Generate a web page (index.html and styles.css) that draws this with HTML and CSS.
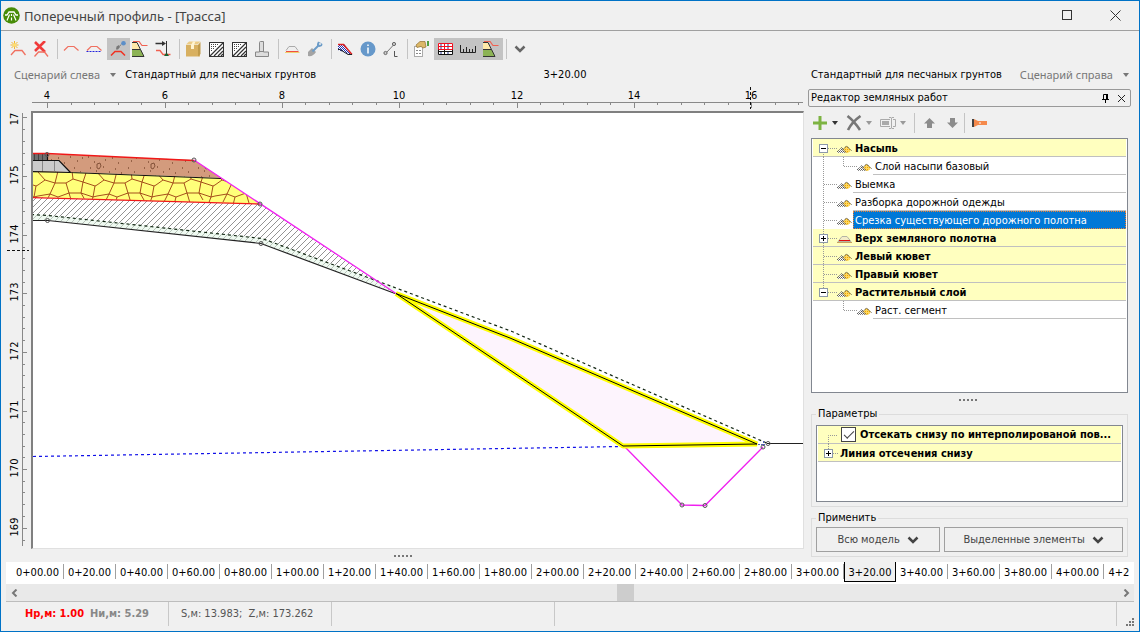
FILE: index.html
```html
<!DOCTYPE html>
<html lang="ru">
<head>
<meta charset="utf-8">
<meta name="viewport" content="width=device-width, initial-scale=1">
<title>Поперечный профиль - [Трасса]</title>
<link rel="stylesheet" href="styles.css">
</head>
<body>
<svg class="defs" width="0" height="0" aria-hidden="true">
  <defs>
    <pattern id="dots" width="2" height="2" patternUnits="userSpaceOnUse">
      <rect width="2" height="2" fill="#fff"/><rect width="1" height="1" fill="#555"/><rect x="1" y="1" width="1" height="1" fill="#888"/>
    </pattern>
    <pattern id="dots-gold" width="2" height="2" patternUnits="userSpaceOnUse">
      <rect width="2" height="2" fill="#ffd860"/><rect width="1" height="1" fill="#f0a800"/>
    </pattern>
    <pattern id="dots-blue" width="2" height="2" patternUnits="userSpaceOnUse">
      <rect width="2" height="2" fill="#fff"/><rect width="1" height="1" fill="#2030b0"/><rect x="1" y="1" width="1" height="1" fill="#2030b0"/>
    </pattern>
    <symbol id="layers" viewBox="0 0 15 8">
      <path d="M0 8L4.500 3L9 8Z" fill="url(#dots)"/>
      <path d="M6 4.500L9.500 1L14 5L11 8H9Z" fill="url(#dots-gold)"/>
      <path d="M0 7L4.500 2.500L9 7.500M6 4.500L9.500 1L14.500 5.500" fill="none" stroke="#333" stroke-width=".9" stroke-dasharray="1.200 .6"/>
    </symbol>
    <symbol id="crown" viewBox="0 0 15 8">
      <path d="M1 6.500L5 1.500H10L14 6.500Z" fill="#f4edc8" stroke="#b4b4a4"/>
      <path d="M2 5.500H13" stroke="#e01010"/><path d="M0 7.500H15" stroke="#c8a060"/>
    </symbol>
    <symbol id="chevron" viewBox="0 0 12 8"><path d="M1.500 1.500L6 6L10.500 1.500" fill="none" stroke="currentColor" stroke-width="2.500"/></symbol>
    <symbol id="caret" viewBox="0 0 6 4"><path d="M0 0H6L3 4Z" fill="currentColor"/></symbol>
    <symbol id="slope" viewBox="0 0 16 16">
      <path d="M0 2H5L8 8.500H0Z" fill="#ffe9a8"/><path d="M0 9H9L12 15.500H0Z" fill="#8cb355"/>
      <path d="M0 1.500H5L8.500 8.500L12 15.500H0M0 8.500H8.500" fill="none" stroke="#333"/>
      <path d="M1 .5H7L10 4.500H15.500" fill="none" stroke="#f06050" stroke-width="1.200"/>
    </symbol>
    <symbol id="hatchbox" viewBox="0 0 16 16">
      <rect x="1.500" y="1.500" width="14" height="14" fill="#fff" stroke="#333"/>
      <path d="M2 15L15 2M6 15L15 6M10 15L15 10M13 15L15 13" stroke="#333" stroke-width="1.200"/>
      <path d="M3 3.500H11M3 5.500H9M3 7.500H7M3 9.500H5" stroke="#444" stroke-dasharray="1 1"/>
    </symbol>
  </defs>
</svg>

<div class="window">
  <header class="titlebar">
    <svg class="logo" width="17" height="17" viewBox="0 0 17 17"><circle cx="8.500" cy="8.500" r="8.300" fill="#478c08"/><path d="M2 8H4L6 5H11L13 8H15" fill="none" stroke="#fff" stroke-width="1.300"/><path d="M6.500 7.500L4 13.500M10.500 7.500L13 13.500M8.500 7V9M8.500 10.500V13.500" stroke="#fff" stroke-width="1.200"/></svg>
    <h1 class="title">Поперечный профиль - [Трасса]</h1>
    <button class="winbtn" aria-label="Развернуть"><svg width="11" height="11" viewBox="0 0 11 11"><rect x=".5" y=".5" width="9" height="9" fill="none" stroke="#333"/></svg></button>
    <button class="winbtn" aria-label="Закрыть"><svg width="11" height="11" viewBox="0 0 11 11"><path d="M.5 .5L10.500 10.500M10.500 .5L.5 10.500" stroke="#333" fill="none"/></svg></button>
  </header>

  <div class="toolbar" role="toolbar" aria-label="Инструменты">
    <button class="tool" aria-label="Создать линию"><svg width="16" height="16" viewBox="0 0 16 16"><path d="M4.500 0V8M.5 4H8.500M1.500 1L7.500 7M7.500 1L1.500 7" stroke="#f2b632" stroke-width="1"/><circle cx="4.500" cy="4" r="1.700" fill="#ffdf70"/><path d="M1 14L5 9.500H12L15.500 14" fill="none" stroke="#f07060" stroke-width="1.300"/></svg></button>
    <button class="tool" aria-label="Удалить линию"><svg width="16" height="16" viewBox="0 0 16 16"><path d="M2 1L12 11M12 0L2 10" stroke="#f03a3a" stroke-width="2.600"/><path d="M1.500 15.500L5.500 11H11.500L15 15.500" fill="none" stroke="#f07060" stroke-width="1.300"/></svg></button>
    <span class="sep"></span>
    <button class="tool" aria-label="Линия"><svg width="16" height="16" viewBox="0 0 16 16"><path d="M1 9.500L5 5.500H11L15.500 9.500" fill="none" stroke="#f07060" stroke-width="1.200"/></svg></button>
    <button class="tool" aria-label="Линия основания"><svg width="16" height="16" viewBox="0 0 16 16"><path d="M1 9.500L5 5.500H11L15.500 9.500" fill="none" stroke="#f07060" stroke-width="1.200"/><path d="M.5 10.500H15.500" stroke="#2222dd" stroke-dasharray="2 1"/></svg></button>
    <button class="tool on" aria-pressed="true" aria-label="Конструктор линии"><svg width="16" height="16" viewBox="0 0 16 16"><path d="M1 14.500L5 10.500H11L15 14.500" fill="none" stroke="#f03020" stroke-width="1.500"/><path d="M8 6.500L13 2" stroke="#777" stroke-dasharray="1.500 1"/><path d="M6.500 5.500L9 4L10 6L8 8.500H6Z" fill="#777"/><circle cx="13.500" cy="2.300" r="2.300" fill="#5c8fc8"/></svg></button>
    <button class="tool" aria-label="Откос"><svg width="16" height="16"><use href="#slope"/></svg></button>
    <button class="tool" aria-label="Привязка"><svg width="16" height="16" viewBox="0 0 16 16"><path d="M.5 2.500H9" stroke="#333" stroke-width="1.500"/><path d="M7 0L11 2.500L7 5Z" fill="#333"/><path d="M11.500 0V14.500" stroke="#333"/><path d="M1 9.500H5L8 13.500H15.500" fill="none" stroke="#f06050" stroke-width="1.300"/><path d="M9 15L11.500 11.500L14 15Z" fill="#176030"/></svg></button>
    <span class="sep"></span>
    <button class="tool" aria-label="Библиотека"><svg width="16" height="16" viewBox="0 0 16 16"><path d="M1 4H15V15.500H1Z" fill="#d8b060"/><path d="M1 3.500L4 .5H15.500L12.500 3.500Z" fill="#eccb85"/><path d="M13 4L15.500 1V13L13 15.500Z" fill="#c09a4a"/><path d="M6 4L8 .5H10.500L9 4V8H6Z" fill="#fff3d0"/></svg></button>
    <button class="tool" aria-label="Штриховка"><svg width="16" height="16"><use href="#hatchbox"/></svg></button>
    <button class="tool" aria-label="Штриховка слоя"><svg width="16" height="16"><use href="#hatchbox"/></svg></button>
    <button class="tool" aria-label="Фундамент"><svg width="14" height="16" viewBox="0 0 14 16"><path d="M4.500 11V1.500Q4.500 .5 5.500 .5H8.500V11H13.500V15.500H.5V11H4.500" fill="#ddd" stroke="#888"/><path d="M5 10.500H8" stroke="#888"/></svg></button>
    <span class="sep"></span>
    <button class="tool" aria-label="Верх полотна"><svg width="16" height="16" viewBox="0 0 16 16"><path d="M2 9.500L5 5.500H11L14 9.500" fill="#eee" stroke="#aaa"/><path d="M1 11.500H15.500" stroke="#f0d070"/><path d="M2 10.500H14.500" stroke="#f05040"/></svg></button>
    <button class="tool" aria-label="Земляные работы"><svg width="16" height="16" viewBox="0 0 16 16"><path d="M1 11L5 7L9 11Q6 16 1 15Z" fill="#a4a4a4"/><path d="M5.500 10.500L12 4" stroke="#6c9cc8" stroke-width="2"/><path d="M10 3L11 .5L13 1.500L15.500 3L15 5L12.500 6L10 5Z" fill="#6c9cc8"/><circle cx="13" cy="3" r="1" fill="#eee"/></svg></button>
    <span class="sep"></span>
    <button class="tool" aria-label="Заливка слоёв"><svg width="16" height="16" viewBox="0 0 16 16"><path d="M1 3H7L15 13H12L1 9Z" fill="url(#dots-blue)"/><path d="M1 3.500H6.500L15 13.500" fill="none" stroke="#e02020" stroke-width="1.500"/><path d="M1 8.500H3L11 13.500H15" fill="none" stroke="#222"/></svg></button>
    <button class="tool" aria-label="Информация"><svg width="16" height="16" viewBox="0 0 16 16"><circle cx="8" cy="8" r="7.500" fill="#6698ca"/><path d="M8 3.500V5M8 6.500V12.500" stroke="#fff" stroke-width="1.500"/></svg></button>
    <button class="tool" aria-label="Длина"><svg width="16" height="16" viewBox="0 0 16 16"><path d="M3.500 11.500L10.500 4" stroke="#777"/><circle cx="2.500" cy="12" r="1.600" fill="#ccc" stroke="#666"/><circle cx="11" cy="3" r="1.600" fill="#ccc" stroke="#666"/><path d="M11.500 10V15.500H14.500" fill="none" stroke="#555"/></svg></button>
    <span class="sep"></span>
    <button class="tool" aria-label="Свойства"><svg width="16" height="16" viewBox="0 0 16 16"><rect x="1.500" y="5.500" width="8" height="10" fill="#fff" stroke="#aaa"/><path d="M3 9.500H8M3 12.500H8" stroke="#888" stroke-dasharray="2 1"/><path d="M3 4L7 .5H12L13 6L10 7L8 5.500L4 6.500Z" fill="#dcb868" stroke="#907030" stroke-width=".7"/><path d="M15 0V5" stroke="#50a040" stroke-width="2"/></svg></button>
    <button class="tool on" aria-pressed="true" aria-label="Таблица"><svg width="16" height="16" viewBox="0 0 16 16"><rect x="1" y="2" width="15" height="12" fill="#fff"/><path d="M1.500 8V13.500H15.500V8M1.500 10.500H15.500M7.500 8V13.500" fill="none" stroke="#111"/><path d="M1.500 2.500H15.500V8.500H1.500ZM7.500 2.500V8.500M1.500 5.500H15.500" fill="none" stroke="#f01020"/><path d="M3 4H5M10 4H12M3 7H5M10 7H12M3 12H5M10 12H12" stroke="#223090"/></svg></button>
    <button class="tool on" aria-pressed="true" aria-label="Линейка"><svg width="16" height="16" viewBox="0 0 16 16"><path d="M.5 4V11.500H15.500V5M3.500 11V8M6.500 11V6M9.500 11V8M12.500 11V8" fill="none" stroke="#222"/></svg></button>
    <button class="tool on" aria-pressed="true" aria-label="Редактор откоса"><svg width="16" height="16"><use href="#slope"/></svg></button>
    <span class="sep"></span>
    <button class="tool" aria-label="Ещё"><svg class="dim" width="12" height="8"><use href="#chevron"/></svg></button>
  </div>

  <div class="scenarios">
    <div class="scn start">
      <button class="scn-btn">Сценарий слева <svg width="6" height="4"><use href="#caret"/></svg></button>
      <span>Стандартный для песчаных грунтов</span>
    </div>
    <output>3+20.00</output>
    <div class="scn end">
      <span>Стандартный для песчаных грунтов</span>
      <button class="scn-btn">Сценарий справа <svg width="6" height="4"><use href="#caret"/></svg></button>
    </div>
  </div>

  <main class="work">
    <section class="profile" aria-label="Поперечный профиль">
      <svg class="ruler-x">
        <path class="rule" d="M32 17.500H1200"/>
        <path class="rule" d="M47.500 18v5M71.500 18v2M94.500 18v2M118.500 18v2M141.500 18v2M165.500 18v5M188.500 18v2M212.500 18v2M235.500 18v2M259.500 18v2M282.500 18v5M305.500 18v2M329.500 18v2M352.500 18v2M376.500 18v2M399.500 18v5M423.500 18v2M446.500 18v2M470.500 18v2M493.500 18v2M517.500 18v5M540.500 18v2M563.500 18v2M587.500 18v2M610.500 18v2M634.500 18v5M657.500 18v2M681.500 18v2M704.500 18v2M728.500 18v2M751.500 18v5M775.500 18v2M798.500 18v2"/>
        <g text-anchor="middle"><text x="47" y="14">4</text><text x="165" y="14">6</text><text x="282" y="14">8</text><text x="399" y="14">10</text><text x="517" y="14">12</text><text x="634" y="14">14</text><text x="751" y="14">16</text></g>
        <path class="mark" d="M750.500 2V24"/>
      </svg>
      <svg class="ruler-y">
        <path class="rule" d="M22.500 2V435"/>
        <path class="rule" d="M23 6.500h4M23 18.500h2M23 30.500h2M23 42.500h2M23 53.500h2M23 65.500h4M23 77.500h2M23 89.500h2M23 100.500h2M23 112.500h2M23 124.500h4M23 136.500h2M23 147.500h2M23 159.500h2M23 171.500h2M23 182.500h4M23 194.500h2M23 206.500h2M23 217.500h2M23 229.500h2M23 241.500h4M23 253.500h2M23 264.500h2M23 276.500h2M23 288.500h2M23 300.500h4M23 311.500h2M23 323.500h2M23 335.500h2M23 346.500h2M23 358.500h4M23 370.500h2M23 381.500h2M23 393.500h2M23 405.500h2M23 417.500h4M23 429.500h2"/>
        <g text-anchor="middle"><text transform="translate(18 8) rotate(-90)">17</text><text transform="translate(18 64) rotate(-90)">175</text><text transform="translate(18 123) rotate(-90)">174</text><text transform="translate(18 181) rotate(-90)">173</text><text transform="translate(18 240) rotate(-90)">172</text><text transform="translate(18 299) rotate(-90)">171</text><text transform="translate(18 357) rotate(-90)">170</text><text transform="translate(18 416) rotate(-90)">169</text></g>
        <path class="mark" d="M7 139.500H29"/>
      </svg>
      <div class="canvas">
        <svg class="drawing" role="img" aria-label="Чертёж профиля на пикете 3+20.00">
          <defs>
            <pattern id="hatch" width="6" height="6" patternUnits="userSpaceOnUse"><path d="M-1 1L1 -1M-1 7L7 -1M5 7L7 5" stroke="#777" stroke-width=".8"/></pattern>
            <pattern id="gravel" x="31" y="150" width="54" height="34" patternUnits="userSpaceOnUse">
              <rect width="54" height="34" fill="#d39b7d"/>
              <path d="M3 7h1M9 12h1M14 6h1M20 10h1M27 8h1M33 13h1M39 7h1M46 11h1M51 8h1M5 18h1M11 21h1M18 17h1M24 22h1M30 19h1M36 23h1M43 18h1M49 22h1M8 27h1M16 26h1M22 29h1M29 27h1M37 28h1M45 27h1" stroke="#5b2a10"/>
              <path d="M12 14L15 13L16 16L14 19L12 18Z" fill="none" stroke="#7a4a30" stroke-width=".9"/>
            </pattern>
            <pattern id="stone" x="38" y="171" width="59" height="34" patternUnits="userSpaceOnUse">
              <rect width="59" height="34" fill="#ffff7a"/>
              <path d="M0 1L7 9L17 12L20 0M7 9L0 14M17 12L12 23L0 25M12 23L20 26L31 22L28 12L17 12M28 12L35 8L34 0M35 8L45 11L48 2M45 11L43 22L31 22M43 22L47 29M45 11L57 15L59 14M57 15L55 26L43 22M55 26L59 25M20 26L18 34M31 22L34 32M12 23L8 31M55 26L52 34" fill="none" stroke="#9a3a10" stroke-width=".9"/>
            </pattern>
          </defs>
          <g transform="translate(-33 -113)" fill="none">
            <path d="M31 197L260 204L395 293L261 243L48 220H31Z" fill="url(#hatch)"/>
            <path d="M31 214L48 215L262 238L395 287V293L261 243L48 220H31Z" fill="#dff5e4" fill-opacity=".5"/>
            <path d="M31 171L70 172L221 178L260 204L31 197Z" fill="url(#stone)"/>
            <path d="M31 154H47L194 160L221 178L70 172H31Z" fill="url(#gravel)"/>
            <path d="M31 160.500H59L70 172L31 171Z" fill="#cbcbcb"/>
            <path d="M42.500 161V171M54.500 161V171" stroke="#888"/>
            <path d="M31 154H47V160H31Z" fill="#6e6e6e"/>
            <path d="M34.500 154V160M38.500 154V160M42.500 154V160" stroke="#444"/>
            <path d="M47.500 154V160.500M31 160.500H59L70.500 172.500M31 171.500L70 172.500L221 178.500" stroke="#111" stroke-width="1.200"/>
            <path d="M31 153.500H47L194 160.500M31 197.500L260 204" stroke="#f01818" stroke-width="1.300"/>
            <path d="M31 220.500H48L261 243.500L395 293.500M767 443.500H1200" stroke="#222" stroke-width="1.200"/>
            <path d="M31 214.500L48 215.500L262 238.500L380 282L480 319.500L512 331.500L622 380L762 441L768 443.500" stroke="#142814" stroke-dasharray="3 3" stroke-width="1.200"/>
            <path d="M194 160L396 293.500M625 447L682 505L705 505.500L763 447" stroke="#f020f0" stroke-width="1.300"/>
            <path d="M33 456.500L622 446.500" stroke="#1010e8" stroke-dasharray="3 3" stroke-width="1.200"/>
            <path d="M396 293.500L510 338L757 444L623 446Z" fill="#fdf4fd" stroke="#ff0" stroke-width="5" stroke-linejoin="bevel"/>
            <path d="M396 293.500L510 338L757 444L623 446Z" stroke="#000"/>
            <path d="M758 444.500H765M763.500 441V447" stroke="#5060c0" stroke-dasharray="2 1"/>
            <g stroke="#555"><circle cx="47" cy="154.500" r="2"/><circle cx="194" cy="160" r="2"/><circle cx="260" cy="204" r="2"/><circle cx="47.500" cy="220.500" r="2"/><circle cx="261" cy="243.500" r="2"/><circle cx="682" cy="505" r="2"/><circle cx="705" cy="505.500" r="2"/><circle cx="763" cy="447" r="2"/><circle cx="768" cy="443.500" r="2"/></g>
          </g>
        </svg>
      </div>
      <div class="grip"><i></i></div>
    </section>

    <aside class="panel">
      <header class="panel-head">
        <h2>Редактор земляных работ</h2>
        <button class="mini" aria-label="Закрепить"><svg width="9" height="11" viewBox="0 0 9 11"><path d="M2.500 6V1.500H6.500V6M1 6.500H8M4.500 7V10" fill="none" stroke="#000"/><path d="M6 1V6" stroke="#000" stroke-width="2"/></svg></button>
        <button class="mini" aria-label="Закрыть панель"><svg width="9" height="9" viewBox="0 0 9 9"><path d="M1 1L8 8M8 1L1 8" stroke="#222"/></svg></button>
      </header>
      <div class="panel-tools" role="toolbar" aria-label="Действия">
        <button class="ptool wide" aria-label="Добавить"><svg width="16" height="16" viewBox="0 0 16 16"><path d="M8 1V15M1 8H15" stroke="#7db342" stroke-width="3"/></svg><svg class="dark" width="6" height="4"><use href="#caret"/></svg></button>
        <button class="ptool wide" aria-label="Удалить"><svg width="16" height="16" viewBox="0 0 16 16"><path d="M1.500 1Q8 6 14 15M14.500 1Q6 7 2 15" fill="none" stroke="#777" stroke-width="2.600"/></svg><svg width="6" height="4"><use href="#caret"/></svg></button>
        <button class="ptool wide" aria-label="Переименовать"><svg width="16" height="16" viewBox="0 0 16 16"><path d="M10 4.500H.5V11.500H10M13 4.500H15.500V11.500H13M11.500 3V13M9 2.500H11L11.500 3L12 2.500H14M9 13.500H11L11.500 13L12 13.500H14" fill="none" stroke="#aaa"/><path d="M2 6H9V10H2Z" fill="#aaa"/></svg><svg width="6" height="4"><use href="#caret"/></svg></button>
        <span class="sep tall"></span>
        <button class="ptool" aria-label="Вверх"><svg width="11" height="10" viewBox="0 0 11 10"><path d="M5.500 0L11 5.500H8V10H3V5.500H0Z" fill="#8c8c8c"/></svg></button>
        <button class="ptool" aria-label="Вниз"><svg width="11" height="10" viewBox="0 0 11 10"><path d="M5.500 10L11 4.500H8V0H3V4.500H0Z" fill="#8c8c8c"/></svg></button>
        <span class="sep tall"></span>
        <button class="ptool" aria-label="Подсветить"><svg width="15" height="8" viewBox="0 0 15 8"><path d="M2 0L6 2H15V6H6L2 8Z" fill="#f58a4c"/><path d="M1 0V8" stroke="#444" stroke-width="2"/><path d="M7 4H9" stroke="#fff"/></svg></button>
      </div>

      <ul class="tree" role="tree" aria-label="Земляные работы">
        <li class="row group" role="treeitem" aria-expanded="true"><svg class="guide" width="40" height="18"><path d="M10.500 13V18M15 9.500H24"/><use href="#layers" x="24" y="6" width="15" height="8"/></svg><button class="exp minus" aria-label="Свернуть"></button><span class="label">Насыпь</span></li>
        <li class="row sub" role="treeitem"><svg class="guide" width="60" height="18"><path d="M10.500 0V18M30.500 0V9.500H44"/><use href="#layers" x="44" y="6" width="15" height="8"/></svg><span class="label">Слой насыпи базовый</span></li>
        <li class="row" role="treeitem"><svg class="guide" width="40" height="18"><path d="M10.500 0V18M11 9.500H24"/><use href="#layers" x="24" y="6" width="15" height="8"/></svg><span class="label">Выемка</span></li>
        <li class="row" role="treeitem"><svg class="guide" width="40" height="18"><path d="M10.500 0V18M11 9.500H24"/><use href="#layers" x="24" y="6" width="15" height="8"/></svg><span class="label">Разборка дорожной одежды</span></li>
        <li class="row selected" role="treeitem" aria-selected="true"><svg class="guide" width="40" height="18"><path d="M10.500 0V18M11 9.500H24"/><use href="#layers" x="24" y="6" width="15" height="8"/></svg><span class="label">Срезка существующего дорожного полотна</span></li>
        <li class="row group" role="treeitem" aria-expanded="false"><svg class="guide" width="40" height="18"><path d="M10.500 0V18M15 9.500H24"/><use href="#crown" x="24" y="6" width="15" height="8"/></svg><button class="exp plus" aria-label="Развернуть"></button><span class="label">Верх земляного полотна</span></li>
        <li class="row group" role="treeitem"><svg class="guide" width="40" height="18"><path d="M10.500 0V18M11 9.500H24"/><use href="#layers" x="24" y="6" width="15" height="8"/></svg><span class="label">Левый кювет</span></li>
        <li class="row group" role="treeitem"><svg class="guide" width="40" height="18"><path d="M10.500 0V18M11 9.500H24"/><use href="#layers" x="24" y="6" width="15" height="8"/></svg><span class="label">Правый кювет</span></li>
        <li class="row group" role="treeitem" aria-expanded="true"><svg class="guide" width="40" height="18"><path d="M10.500 0V5M15 9.500H24"/><use href="#layers" x="24" y="6" width="15" height="8"/></svg><button class="exp minus" aria-label="Свернуть"></button><span class="label">Растительный слой</span></li>
        <li class="row sub" role="treeitem"><svg class="guide" width="60" height="18"><path d="M30.500 0V9.500H44"/><use href="#layers" x="44" y="6" width="15" height="8"/></svg><span class="label">Раст. сегмент</span></li>
      </ul>

      <div class="grip"><i></i></div>

      <fieldset class="box">
        <legend>Параметры</legend>
        <ul class="params">
          <li class="row group"><svg class="guide" width="20" height="18"><path d="M10.500 18V9.500H20"/></svg><label class="check"><input type="checkbox" checked><span class="label">Отсекать снизу по интерполированой пов...</span></label></li>
          <li class="row group"><svg class="guide" width="20" height="18"><path d="M10.500 0V5M15 9.500H22"/></svg><button class="exp plus" aria-label="Развернуть"></button><span class="label">Линия отсечения снизу</span></li>
        </ul>
      </fieldset>

      <fieldset class="box last">
        <legend>Применить</legend>
        <div class="apply">
          <button class="push">Всю модель <svg width="12" height="8"><use href="#chevron"/></svg></button>
          <button class="push">Выделенные элементы <svg width="12" height="8"><use href="#chevron"/></svg></button>
        </div>
      </fieldset>
    </aside>
  </main>

  <nav class="stations" aria-label="Пикеты">
    <button>0+00.00</button><button>0+20.00</button><button>0+40.00</button><button>0+60.00</button><button>0+80.00</button><button>1+00.00</button><button>1+20.00</button><button>1+40.00</button><button>1+60.00</button><button>1+80.00</button><button>2+00.00</button><button>2+20.00</button><button>2+40.00</button><button>2+60.00</button><button>2+80.00</button><button>3+00.00</button><button class="current" aria-current="true">3+20.00</button><button>3+40.00</button><button>3+60.00</button><button>3+80.00</button><button>4+00.00</button><button>4+20.00</button>
  </nav>
  <div class="scroll">
    <button aria-label="Влево"><svg width="7" height="8" viewBox="0 0 7 8"><path d="M5.500 .5L2 4L5.500 7.500" fill="none" stroke="#777" stroke-width="2"/></svg></button>
    <div class="track"><div class="thumb" style="margin-left:54.3%"></div></div>
    <button aria-label="Вправо"><svg width="7" height="8" viewBox="0 0 7 8"><path d="M1.500 .5L5 4L1.500 7.500" fill="none" stroke="#777" stroke-width="2"/></svg></button>
  </div>
  <footer class="status">
    <div class="cell c1"><b class="red">Hp,м: 1.00</b><b>Hи,м: 5.29</b></div>
    <div class="cell c2">S,м: 13.983;&nbsp; Z,м: 173.262</div>
    <div class="cell c3"></div>
    <div class="cell c4"></div>
    <svg class="resize" width="8" height="8" viewBox="0 0 8 8"><path d="M6 0h2v2H6zM3 3h2v2H3zM6 3h2v2H6zM0 6h2v2H0zM3 6h2v2H3zM6 6h2v2H6z" fill="#777"/></svg>
  </footer>
</div>
</body>
</html>
```
FILE: styles.css
```css
* { box-sizing: border-box; }
body {
  margin: 0;
  font: 11px/14px Tahoma, "DejaVu Sans Condensed", "DejaVu Sans", sans-serif;
  color: #000;
  background: #f0f0f0;
}
button { font: inherit; color: inherit; border: 0; padding: 0; margin: 0; background: none; }
h1, h2, ul { margin: 0; padding: 0; font: inherit; list-style: none; }
svg { display: block; flex: none; }
.defs { position: absolute; }

.window {
  display: flex;
  flex-direction: column;
  min-height: 100vh;
  border: 1px solid #0072c6;
  background: #f0f0f0;
  overflow: hidden;
}

.titlebar { display: flex; align-items: center; height: 30px; padding-left: 2px; border-bottom: 1px solid #a0a0a0; }
.title { flex: 1; margin-left: 4px; font: 13px/20px "Noto Sans", sans-serif; color: #444; }
.winbtn { width: 48px; height: 28px; display: flex; align-items: center; justify-content: center; }

.toolbar { display: flex; align-items: center; height: 34px; padding: 1px 7px 0; }
.tool { width: 23px; height: 22px; padding-right: 3px; display: flex; align-items: center; justify-content: center; }
.tool.on { padding-right: 1px; background: #c3c3c3; }
.sep { width: 1px; height: 20px; margin: 0 3px; background: #c4c4c4; }
.dim { color: #666; }

.scenarios { display: grid; grid-template-columns: 1fr auto 1fr; align-items: center; height: 20px; padding-right: 10px; }
.scn { display: flex; align-items: center; gap: 9px; white-space: nowrap; }
.scn.start { padding-left: 13px; }
.scn.end { justify-content: flex-end; gap: 18px; }
.scn-btn { display: flex; align-items: center; gap: 10px; font: 11px/16px "Noto Sans", sans-serif; color: #777; }

.work { flex: 1; display: flex; min-height: 0; }
.profile { flex: 1; min-width: 0; display: grid; grid-template: 26px 1fr 13px / 30px 1fr; }
.ruler-x { grid-column: 1 / 3; width: 100%; height: 26px; margin-left: -1px; overflow: hidden; }
.ruler-y { width: 31px; height: 100%; margin-left: -1px; overflow: hidden; }
.rule { stroke: #888; fill: none; }
.mark { stroke: #111; stroke-dasharray: 3 2; }
.canvas { position: relative; overflow: hidden; background: #fff; border: solid #e0e0e0; border-width: 2px 1px 1px 2px; border-top-color: #808080; border-left-color: #808080; }
.drawing { position: absolute; inset: 0; width: 100%; height: 100%; }
.grip { flex: none; grid-column: 1 / 3; display: flex; align-items: center; justify-content: center; height: 14px; }
.grip i { width: 18px; height: 2px; background: repeating-linear-gradient(90deg, #777 0 2px, transparent 2px 4px); }

.panel { flex: none; width: 335px; padding: 4px 8px 0 0; display: flex; flex-direction: column; }
.panel-head { display: flex; align-items: center; height: 18px; margin-left: 4px; padding: 0 1px 0 2px; border: 1px solid #999; border-radius: 2px; }
.panel-head h2 { flex: 1; }
.mini { width: 16px; height: 14px; display: flex; align-items: center; justify-content: center; }
.panel-tools { display: flex; align-items: center; height: 31px; padding-left: 8px; color: #999; }
.ptool { width: 23px; height: 22px; display: flex; align-items: center; justify-content: center; }
.ptool.wide { width: 34px; justify-content: flex-start; gap: 4px; }
.sep.tall { margin: 0 3px 0 0; }
.dark { color: #333; }

.tree, .params { border: 1px solid #828790; background: #fff; }
.tree { flex: 1; margin: 0 3px 0 7px; padding: 0 1px; }
.row { position: relative; display: flex; height: 18px; line-height: 19px; }
.guide { fill: none; stroke: none; }
.guide > path { stroke: #999; stroke-dasharray: 1 1; }
.label { flex: 1; min-width: 0; padding-left: 2px; border-bottom: 1px solid #c0c0c0; overflow: hidden; white-space: nowrap; }
.group { font-weight: bold; background: #ffffbf; border-bottom: 1px solid #c0c0c0; }
.group .label { border-bottom: 0; }
.selected .label { color: #fff; background: #0078d7; border: 0; outline: 1px dotted #f08030; outline-offset: -1px; }
.exp { position: absolute; left: 6px; top: 5px; width: 9px; height: 9px; border: 1px solid #8c98a8; background: linear-gradient(#000, #000) center / 5px 1px no-repeat, #fff; }
.exp.plus { background: linear-gradient(#000, #000) center / 5px 1px no-repeat, linear-gradient(#000, #000) center / 1px 5px no-repeat, #fff; }

.box { min-width: 0; margin: 0 3px 4px 7px; padding: 4px; border: 1px solid #dcdcdc; }
.box.last { margin-bottom: 5px; padding-top: 2px; }
.box legend { padding: 0 2px; }
.params { height: 77px; padding: 0 1px; }
.check { flex: 1; min-width: 0; display: flex; align-items: center; gap: 2px; }
.check input { appearance: none; flex: none; width: 15px; height: 15px; margin: 0 0 0 3px; border: 1px solid #444; background: #fff; display: grid; place-items: center; }
.check input:checked::before { content: ""; width: 9px; height: 4px; border: solid #444; border-width: 0 0 1px 1px; transform: translateY(-1px) rotate(-45deg); }
.apply { display: grid; grid-template-columns: 125fr 180fr; gap: 4px; }
.push { height: 25px; display: flex; align-items: center; justify-content: center; gap: 7px; border: 1px solid #a0a0a0; color: #444; }

.stations { display: flex; height: 22px; margin: 0 5px; border: solid #fff; border-width: 0 5px 0 6px; background: #fff; overflow: hidden; }
.stations button { flex: none; width: 52px; height: 15px; margin-top: 2px; border-right: 1px solid #a0a0a0; line-height: 17px; }
.stations button:last-child { border: 0; }
.stations .current { height: 20px; margin-top: 0; padding-top: 2px; background: #f0f0f0; border: solid #000; border-width: 0 1px 1px; }
.scroll { display: flex; align-items: center; height: 18px; margin: 0 5px; background: #e9e9e9; border-bottom: 1px solid #bdbdbd; }
.scroll button { width: 16px; height: 17px; display: flex; align-items: center; justify-content: center; }
.track { flex: 1; }
.thumb { width: 17px; height: 17px; background: #cdcdcd; }

.status { display: flex; height: 29px; padding: 0 5px 0 12px; color: #555; }
.cell { height: 24px; border-right: 1px solid #c8c8c8; padding: 5px 12px; white-space: nowrap; }
.c1 { width: 156px; display: flex; gap: 6px; color: #888; }
.c2 { width: 163px; }
.c3 { width: 223px; }
.c4 { flex: 1; }
.red { color: #f00; }
.resize { align-self: flex-end; margin: 0 0 5px 9px; }
```
